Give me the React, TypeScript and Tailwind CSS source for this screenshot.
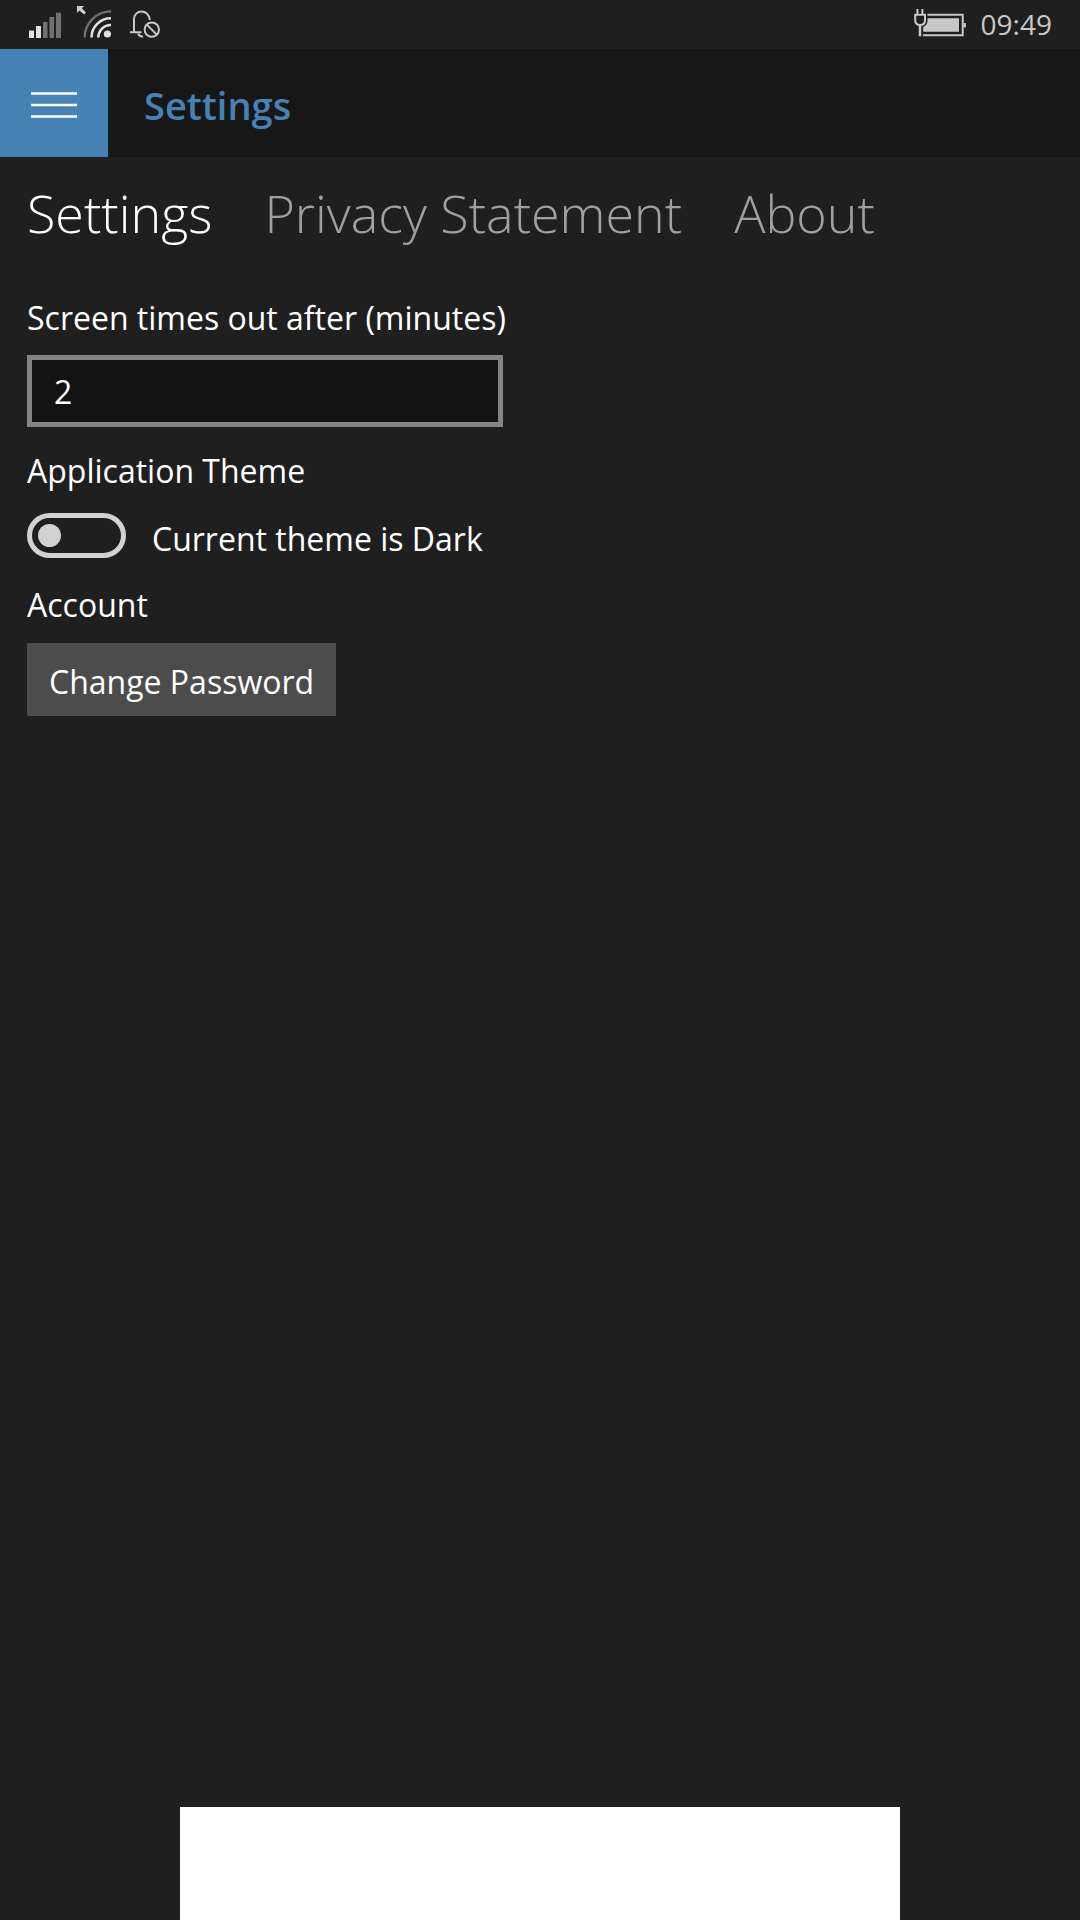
import { useState } from "react";

const tabs = ["Settings", "Privacy Statement", "About"];

function SignalIcon() {
  return (
    <svg width="32" height="26" viewBox="0 0 32 26" aria-hidden="true">
      <path d="M0 18.5h5V26H0zM7 14h5v12H7z" fill="#e0e0e0" />
      <path d="M14 10h4.5v16H14zM20.5 5H25v21h-4.5zM27 .7h5V26h-5z" fill="#717171" />
    </svg>
  );
}

function WifiIcon() {
  return (
    <svg width="34" height="32" viewBox="0 0 34 32" fill="none" aria-hidden="true">
      <path d="M7.6 31.6A26.4 26.4 0 0 1 34 5.4" stroke="#717171" strokeWidth="2.4" />
      <path d="M14.5 31.6A19.4 19.4 0 0 1 34 12.3M21.3 31.6A12.6 12.6 0 0 1 34 19" stroke="#e0e0e0" strokeWidth="2.6" />
      <circle cx="30.4" cy="28" r="3.6" fill="#e0e0e0" />
      <path d="M0 0h7L4.8 2.2l4.2 4.2L7 8.6 2.4 4.4 0 7z" fill="#d0d0d0" />
    </svg>
  );
}

function QuietIcon() {
  return (
    <svg width="30" height="28" viewBox="0 0 30 28" fill="none" stroke="#c8c8c8" strokeWidth="2" aria-hidden="true">
      <path d="M0 22.2h11.5M4 22V9.5C4 4.5 7.5 1.5 11.5 1.5s8 3 8.3 8.5" />
      <path d="M8.3 23.5c.4 2 2 3.2 4.8 3" />
      <circle cx="21.8" cy="19.6" r="7.2" />
      <path d="m16.8 14.6 10 10" />
    </svg>
  );
}

function BatteryIcon() {
  return (
    <svg width="52" height="28" viewBox="0 0 52 28" fill="none" aria-hidden="true">
      <path d="M13.5 5.8h35.2v20.4H9" stroke="#c8c8c8" strokeWidth="2" />
      <path d="M49.5 14h2.3v4.4h-2.3z" fill="#c8c8c8" />
      <path d="M13.5 9.2H45v13.6H9.2V18c3-1.5 4.3-3.5 4.3-6z" fill="#c8c8c8" />
      <path d="M3.4 0v5M8.4 0v5M1.2 5.8H11V11c0 3-2 5-4.9 5s-4.9-2-4.9-5z" stroke="#c8c8c8" strokeWidth="2" />
      <path d="M6 16v11.3" stroke="#c8c8c8" strokeWidth="2.5" />
    </svg>
  );
}

function StatusBar() {
  return (
    <div className="flex h-[49px] items-start justify-between pl-[29px] pr-7 text-[#c8c8c8]">
      <div className="flex items-start">
        <div className="pt-3">
          <SignalIcon />
        </div>
        <div className="pl-4 pt-1.5">
          <WifiIcon />
        </div>
        <div className="pl-[19px] pt-2.5">
          <QuietIcon />
        </div>
      </div>
      <div className="flex items-start gap-[15px]">
        <div className="pt-[9px]">
          <BatteryIcon />
        </div>
        <time className="text-[28px] leading-[48px]">09:49</time>
      </div>
    </div>
  );
}

export default function App() {
  const [activeTab, setActiveTab] = useState("Settings");
  const [timeout, setTimeoutMinutes] = useState("2");
  const [light, setLight] = useState(false);

  return (
    <div className="flex min-h-screen flex-col bg-[#1f1f1f] font-['Open_Sans','Noto_Sans',sans-serif] text-[32px] leading-[44px] text-white">
      <StatusBar />

      <header className="flex h-[108px] items-center bg-[#171717]">
        <button type="button" aria-label="Menu" className="flex size-[108px] items-center justify-center bg-[#4682b4] pt-1">
          <svg width="46" height="26" viewBox="0 0 46 26" aria-hidden="true">
            <path d="M0 1.5h46M0 13h46M0 24.5h46" stroke="#fff" strokeWidth="2.6" />
          </svg>
        </button>
        <h1 className="pl-9 pt-1 text-[38px] font-semibold text-[#4682b4]">Settings</h1>
      </header>

      <main className="flex flex-1 flex-col px-[27px] pt-5">
        <nav className="flex gap-[52px] text-[52px] font-light leading-[72px]">
          {tabs.map((tab) => (
            <button
              key={tab}
              type="button"
              onClick={() => setActiveTab(tab)}
              className={tab === activeTab ? "text-white" : "text-[#a0a0a0]"}
            >
              {tab}
            </button>
          ))}
        </nav>

        <div className="flex flex-col items-start gap-[22px] pt-[47px]">
          <div className="flex flex-col gap-[15px]">
            <label htmlFor="timeout">Screen times out after (minutes)</label>
            <input
              id="timeout"
              type="text"
              inputMode="numeric"
              value={timeout}
              onChange={(e) => setTimeoutMinutes(e.target.value)}
              className="h-[72px] w-[476px] border-5 border-[#858585] bg-[#131313] px-[22px] outline-none"
            />
          </div>

          <section>
            <h2>Application Theme</h2>
            <label className="mt-5 flex items-start gap-[26px]">
              <input
                type="checkbox"
                role="switch"
                checked={light}
                onChange={(e) => setLight(e.target.checked)}
                className="peer sr-only"
              />
              <span className="flex h-[45px] w-[99px] items-center rounded-full border-5 border-[#d2d2d2] px-1.5 peer-checked:justify-end">
                <span className="size-[23px] rounded-full bg-[#d2d2d2]" />
              </span>
              <span className="pt-1">Current theme is {light ? "Light" : "Dark"}</span>
            </label>
          </section>

          <section>
            <h2>Account</h2>
            <button type="button" className="mt-4 h-[73px] bg-[#4c4c4c] px-[22px] pt-1">
              Change Password
            </button>
          </section>
        </div>
      </main>

      {/* Bottom panel */}
      <footer className="mx-auto h-[113px] w-2/3 bg-white" />
    </div>
  );
}
